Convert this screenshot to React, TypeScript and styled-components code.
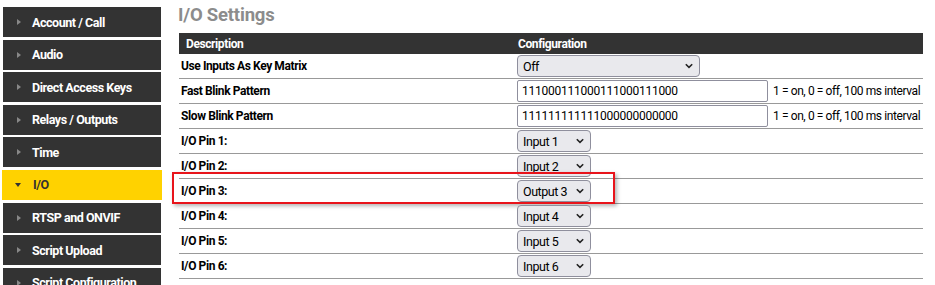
import React from "react";
import styled, { createGlobalStyle } from "styled-components";

const GlobalStyle = createGlobalStyle`
  html, body {
    margin: 0;
    padding: 0;
    background: #fff;
    overflow: hidden;
  }
  body {
    font-family: "Roboto", "Liberation Sans", sans-serif;
  }
`;

const menuItems = [
  "Account / Call",
  "Audio",
  "Direct Access Keys",
  "Relays / Outputs",
  "Time",
  "I/O",
  "RTSP and ONVIF",
  "Script Upload",
  "Script Configuration",
];

const pins = [
  { label: "I/O Pin 1:", value: "Input 1" },
  { label: "I/O Pin 2:", value: "Input 2" },
  { label: "I/O Pin 3:", value: "Output 3", highlight: true },
  { label: "I/O Pin 4:", value: "Input 4" },
  { label: "I/O Pin 5:", value: "Input 5" },
  { label: "I/O Pin 6:", value: "Input 6" },
];

function Chevron() {
  return (
    <svg width="8" height="6" viewBox="0 0 8 6">
      <polyline
        points="0.8,1.2 4,4.3 7.2,1.2"
        fill="none"
        stroke="#222"
        strokeWidth="1.6"
      />
    </svg>
  );
}

function App() {
  return (
    <Page>
      <GlobalStyle />
      <Sidebar>
        {menuItems.map((item) => (
          <MenuItem key={item} $active={item === "I/O"}>
            <Arrow $active={item === "I/O"} />
            {item}
          </MenuItem>
        ))}
      </Sidebar>
      <Main>
        <Title>I/O Settings</Title>
        <Table>
          <HeaderRow>
            <HeaderCell>Description</HeaderCell>
            <HeaderCell $config>Configuration</HeaderCell>
          </HeaderRow>
          <Row>
            <Label>Use Inputs As Key Matrix</Label>
            <Config>
              <SelectBox $width={183}>
                <span>Off</span>
                <Chevron />
              </SelectBox>
            </Config>
          </Row>
          <Row>
            <Label>Fast Blink Pattern</Label>
            <Config>
              <TextInput readOnly value="111000111000111000111000" />
              <Hint>1 = on, 0 = off, 100 ms interval</Hint>
            </Config>
          </Row>
          <Row>
            <Label>Slow Blink Pattern</Label>
            <Config>
              <TextInput readOnly value="111111111111000000000000" />
              <Hint>1 = on, 0 = off, 100 ms interval</Hint>
            </Config>
          </Row>
          {pins.map((pin) => (
            <Row key={pin.label}>
              <Label>{pin.label}</Label>
              <Config>
                <SelectBox $width={74}>
                  <span>{pin.value}</span>
                  <Chevron />
                </SelectBox>
              </Config>
              {pin.highlight && <Highlight />}
            </Row>
          ))}
        </Table>
      </Main>
    </Page>
  );
}

const Page = styled.div`
  display: flex;
  width: 935px;
  height: 285px;
  overflow: hidden;
`;

const Sidebar = styled.nav`
  width: 158px;
  margin-left: 3px;
  padding-top: 7px;
  flex-shrink: 0;
`;

const MenuItem = styled.div<{ $active?: boolean }>`
  display: flex;
  align-items: center;
  height: 30px;
  margin: ${(p) => (p.$active ? "0 -1px 2.6px" : "0 0 2.6px")};
  padding-left: ${(p) => (p.$active ? "13px" : "14px")};
  background: ${(p) => (p.$active ? "#ffd200" : "#333333")};
  color: ${(p) => (p.$active ? "#333" : "#fff")};
  font-size: 12.5px;
  font-weight: bold;
  letter-spacing: -0.45px;
  white-space: nowrap;
`;

const Arrow = styled.span<{ $active?: boolean }>`
  width: 0;
  height: 0;
  flex-shrink: 0;
  margin-right: ${(p) => (p.$active ? "12px" : "11px")};
  ${(p) =>
    p.$active
      ? `
    border-left: 3.5px solid transparent;
    border-right: 3.5px solid transparent;
    border-top: 4px solid #333;
  `
      : `
    border-top: 3.5px solid transparent;
    border-bottom: 3.5px solid transparent;
    border-left: 4px solid #888;
  `}
`;

const Main = styled.main`
  flex: 1;
  padding: 0 12px 0 18px;
`;

const Title = styled.h1`
  margin: 4px 0 6px -1px;
  height: 23px;
  font-size: 18.5px;
  font-weight: bold;
  letter-spacing: -0.2px;
  color: #8c8c8c;
  line-height: 23px;
`;

const Table = styled.div`
  width: 744px;
`;

const HeaderRow = styled.div`
  display: grid;
  grid-template-columns: 338px 1fr;
  height: 21px;
  align-items: center;
  background: #333333;
  color: #fff;
  font-size: 12px;
  font-weight: bold;
  letter-spacing: -0.4px;
`;

const HeaderCell = styled.div<{ $config?: boolean }>`
  padding-left: ${(p) => (p.$config ? "1px" : "7px")};
`;

const Row = styled.div`
  position: relative;
  display: grid;
  grid-template-columns: 338px 1fr;
  height: 24px;
  align-items: center;
  border-bottom: 1px solid #999;
`;

const Label = styled.div`
  padding-left: 2px;
  font-size: 12px;
  font-weight: bold;
  letter-spacing: -0.4px;
  color: #000;
`;

const Config = styled.div`
  display: flex;
  align-items: center;
`;

const SelectBox = styled.div<{ $width: number }>`
  box-sizing: border-box;
  display: flex;
  align-items: center;
  justify-content: space-between;
  width: ${(p) => p.$width}px;
  height: 22px;
  padding: 0 6px 0 5px;
  background: #e9e9ed;
  border: 1px solid #8f8f9d;
  border-radius: 4px;
  font-size: 12.5px;
  letter-spacing: -0.45px;
  white-space: nowrap;
  color: #000;
`;

const TextInput = styled.input`
  box-sizing: border-box;
  width: 251px;
  height: 22px;
  margin: 0;
  padding: 0 4px;
  border: 1px solid #8f8f9d;
  border-radius: 2px;
  font-family: "Roboto", sans-serif;
  font-size: 12px;
  letter-spacing: -0.25px;
  color: #000;
  outline: none;
`;

const Hint = styled.span`
  margin-left: 5px;
  font-size: 12px;
  letter-spacing: -0.4px;
  color: #000;
  white-space: nowrap;
`;

const Highlight = styled.div`
  position: absolute;
  left: -7px;
  top: -7px;
  width: 443px;
  height: 32px;
  box-sizing: border-box;
  border: 2px solid #e8141b;
  box-shadow: 2px 2px 4px rgba(0, 0, 0, 0.3);
  pointer-events: none;
`;

export default App;
